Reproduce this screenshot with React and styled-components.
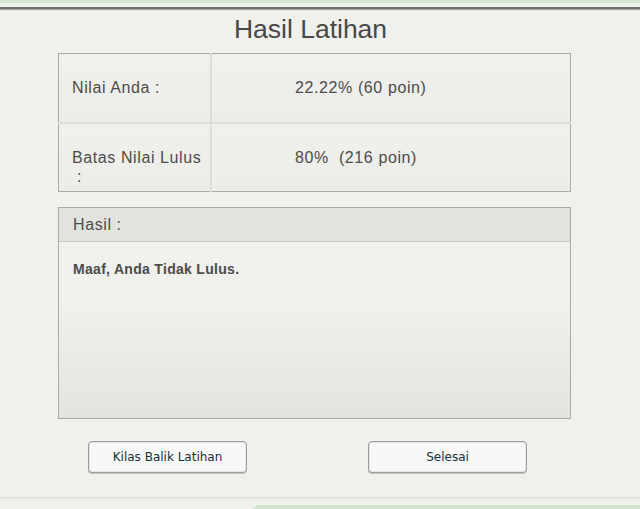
import React from 'react';
import styled, { createGlobalStyle } from 'styled-components';

const GlobalStyle = createGlobalStyle`
  html, body {
    margin: 0;
    padding: 0;
    background: #f0f0ec;
  }
  body {
    font-family: "Liberation Sans", Arial, sans-serif;
    color: #555;
  }
`;

const Page = styled.div`
  width: 640px;
  height: 509px;
  display: flex;
  flex-direction: column;
  overflow: hidden;
`;

// top strip of the host window
const TopStrip = styled.div`
  height: 11px;
  flex-shrink: 0;
  background: linear-gradient(
    to bottom,
    #d3e4d2 0px, #d3e4d2 3px,
    #eef3ec 3px, #eef3ec 7px,
    #6e6e6e 7px, #6e6e6e 9px,
    #a9a9a7 9px, #a9a9a7 10px,
    #e2e2de 10px, #e2e2de 11px
  );
`;

const Content = styled.main`
  flex: 1;
  display: flex;
  flex-direction: column;
  align-items: flex-start;
  padding-left: 58px;
`;

const Title = styled.h1`
  box-sizing: border-box;
  width: 513px;
  margin: 2px 0 0;
  padding-right: 8px;
  height: 40px;
  font-size: 26.5px;
  line-height: 32px;
  font-weight: normal;
  color: #484848;
  text-align: center;
`;

const ScoreTable = styled.table`
  width: 513px;
  border-collapse: collapse;
  border: 1px solid #a9a9a7;
`;

const Row = styled.tr`
  height: 69px;
  background: linear-gradient(to bottom, #f0f0ec, #ecece8);
  & + & td {
    border-top: 2px solid #dcdcd8;
  }
`;

const Cell = styled.td`
  vertical-align: top;
  padding: ${p => (p.$value ? '24px 0 0 83px' : '24px 0 0 13px')};
  font-size: 16px;
  line-height: 19px;
  letter-spacing: 0.6px;
  color: #4c4c4c;
  width: ${p => (p.$value ? 'auto' : '138px')};
  border-left: ${p => (p.$value ? '2px solid #dcdcd8' : 'none')};
`;

const ResultBox = styled.section`
  width: 511px;
  height: 210px;
  margin-top: 15px;
  border: 1px solid #a9a9a7;
  display: flex;
  flex-direction: column;
  background: linear-gradient(to bottom, #f0f0ec 0%, #f0f0ec 45%, #e3e3df 100%);
`;

const ResultHeader = styled.div`
  height: 33px;
  flex-shrink: 0;
  background: #e2e2de;
  border-bottom: 1px solid #c7c7c3;
  padding-left: 14px;
  display: flex;
  align-items: center;
  font-size: 16px;
  letter-spacing: 0.6px;
  color: #4c4c4c;
`;

const ResultText = styled.p`
  margin: 19px 0 0 14px;
  font-size: 14px;
  font-weight: bold;
  letter-spacing: 0.3px;
  color: #4c4c4c;
`;

const ButtonRow = styled.div`
  display: flex;
  margin-top: 22px;
  padding-left: 30px;
  gap: 121px;
`;

const Button = styled.button`
  width: 159px;
  height: 32px;
  padding: 0;
  background: #f8f8f8;
  border: 1px solid #9c9c9c;
  border-radius: 4px;
  box-shadow: inset 0 0 0 1px #e4e4e4, 0 1px 0 #c4c4c4;
  font-family: "DejaVu Sans", Verdana, sans-serif;
  font-size: 12px;
  color: #173036;
  cursor: pointer;
`;

const Footer = styled.footer`
  height: 10px;
  flex-shrink: 0;
  border-top: 2px solid #dfe4e4;
  display: flex;
  justify-content: flex-end;
  align-items: flex-end;
`;

const FooterTab = styled.div`
  width: 387px;
  height: 4px;
  background: #d0e3cf;
  clip-path: polygon(4px 0, 100% 0, 100% 100%, 0 100%);
`;

export default function App() {
  return (
    <Page>
      <GlobalStyle />
      <TopStrip />
      <Content>
        <Title>Hasil Latihan</Title>
        <ScoreTable>
          <tbody>
            <Row>
              <Cell>Nilai Anda :</Cell>
              <Cell $value>22.22% (60 poin)</Cell>
            </Row>
            <Row>
              <Cell>
                Batas Nilai Lulus
                <br />
                &nbsp;:
              </Cell>
              <Cell $value>80%&nbsp; (216 poin)</Cell>
            </Row>
          </tbody>
        </ScoreTable>
        <ResultBox>
          <ResultHeader>Hasil :</ResultHeader>
          <ResultText>Maaf, Anda Tidak Lulus.</ResultText>
        </ResultBox>
        <ButtonRow>
          <Button>Kilas Balik Latihan</Button>
          <Button>Selesai</Button>
        </ButtonRow>
      </Content>
      <Footer>
        <FooterTab />
      </Footer>
    </Page>
  );
}
